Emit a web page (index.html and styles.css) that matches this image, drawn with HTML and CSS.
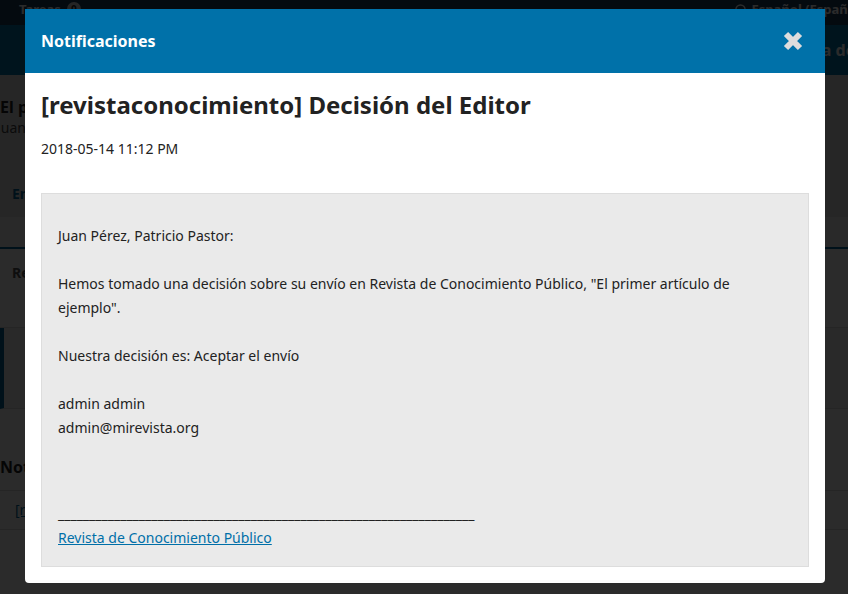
FILE: index.html
```html
<!DOCTYPE html>
<html lang="es">
<head>
<meta charset="utf-8">
<title>Notificaciones</title>
<link rel="stylesheet" href="styles.css">
</head>
<body>
<div class="page">
  <div class="topbar">
    <div class="tasks">Tareas <span class="badge">0</span></div>
    <div class="lang">
      <svg class="globe" width="11" height="11" viewBox="0 0 12 12"><circle cx="6" cy="6" r="5" fill="none" stroke="currentColor" stroke-width="1.6"/></svg>
      Español (España)
    </div>
  </div>
  <div class="header">
    <span class="header-link">Biblioteca de envíos</span>
  </div>
  <div class="subhead">
    <div class="sub-title">El primer artículo de ejemplo</div>
    <div class="sub-authors">Juan Pérez, Patricio Pastor</div>
    <div class="tabs"><span class="tab active">Envío</span></div>
  </div>
  <div class="tabstrip"></div>
  <div class="stage">Revisión</div>
  <div class="notice">
    <div class="notice-title">Envío aceptado</div>
    <div class="notice-text">El envío ha sido aceptado.</div>
  </div>
  <div class="section-title">Notificaciones</div>
  <div class="table-row"><span class="row-link">[revistaconocimiento] Decisión del Editor</span></div>
</div>

<div class="overlay"></div>

<div class="modal">
  <div class="modal-head">
    <span class="modal-title">Notificaciones</span>
    <svg class="close" width="22" height="22" viewBox="0 0 22 22" aria-label="Cerrar">
      <path d="M4 4 L18 18 M18 4 L4 18" stroke="#dddddd" stroke-width="6" stroke-linecap="butt" fill="none"/>
    </svg>
  </div>
  <div class="modal-body">
    <h1 class="subject">[revistaconocimiento] Decisión del Editor</h1>
    <div class="date">2018-05-14 11:12 PM</div>
    <div class="message">
      <div class="msg-text">Juan Pérez, Patricio Pastor:<br><br>Hemos tomado una decisión sobre su envío en Revista de Conocimiento Público, "El primer artículo de ejemplo".<br><br>Nuestra decisión es: Aceptar el envío<br><br>admin admin<br>admin@mirevista.org</div>
      <div class="signature">
        <div class="sig-line">___________________________________________________________________</div>
        <a class="sig-link" href="#">Revista de Conocimiento Público</a>
      </div>
    </div>
  </div>
</div>
</body>
</html>
```
FILE: styles.css
```css
html, body {
  margin: 0;
  padding: 0;
}
body {
  width: 848px;
  height: 594px;
  overflow: hidden;
  font-family: "Noto Sans", "Open Sans", sans-serif;
  color: #222;
  background: #ffffff;
  position: relative;
}

/* background page */
.page {
  width: 848px;
  height: 594px;
  background: #fff;
  overflow: hidden;
}
.topbar {
  height: 25px;
  background: #1a3d5c;
  color: #fff;
  display: flex;
  justify-content: space-between;
  align-items: flex-start;
  padding: 0 0 0 19px;
  font-size: 13px;
  font-weight: 700;
  line-height: 18px;
}
.tasks {
  display: flex;
  align-items: center;
  gap: 6px;
}
.badge {
  display: inline-flex;
  width: 14px;
  height: 14px;
  border-radius: 50%;
  background: #ddd;
  color: #222;
  font-size: 10px;
  align-items: center;
  justify-content: center;
}
.lang {
  display: flex;
  align-items: center;
  gap: 6px;
  white-space: nowrap;
  margin-right: -12px;
}
.header {
  height: 50px;
  background: #0078ae;
  color: #fff;
  font-weight: 700;
  font-size: 16px;
  line-height: 50px;
  white-space: nowrap;
  overflow: hidden;
}
.header-link {
  margin-left: 752px;
}
.subhead {
  height: 142px;
  background: #e2e2e2;
  box-sizing: border-box;
  padding: 21px 0 0 0;
  margin-left: -3px;
}
.sub-title {
  font-size: 16px;
  font-weight: 700;
  line-height: 22px;
  padding-left: 3px;
}
.sub-authors {
  font-size: 14px;
  line-height: 20px;
  color: #444;
}
.tabs {
  margin-top: 44px;
  padding-left: 15px;
}
.tab {
  font-size: 14px;
  font-weight: 700;
  color: #006798;
}
.tabstrip {
  height: 30px;
  background: #f4f4f4;
  border-bottom: 2px solid #006798;
}
.stage {
  height: 78px;
  padding-left: 12px;
  line-height: 48px;
  font-size: 14px;
  font-weight: 700;
  color: #555;
  border-bottom: 1px solid #ddd;
}
.notice {
  height: 81px;
  border-left: 4px solid #006798;
  background: #f0f0f0;
  border-bottom: 1px solid #ddd;
  padding: 15px 0 0 60px;
  box-sizing: border-box;
  font-size: 14px;
  line-height: 24px;
}
.notice-title {
  font-weight: 700;
}
.section-title {
  height: 81px;
  line-height: 116px;
  font-size: 16px;
  font-weight: 700;
  padding-left: 0;
  border-bottom: 1px solid #ddd;
}
.table-row {
  height: 38px;
  line-height: 38px;
  font-size: 14px;
  padding-left: 15px;
  border-bottom: 1px solid #ddd;
}
.row-link {
  color: #006798;
  text-decoration: underline;
}

.overlay {
  position: absolute;
  inset: 0;
  background: rgba(0, 0, 0, 0.83);
}

/* modal */
.modal {
  position: absolute;
  left: 25px;
  top: 9px;
  width: 800px;
  background: #fff;
  border-radius: 0 0 4px 4px;
  overflow: hidden;
}
.modal-head {
  height: 64px;
  background: #0071a9;
  display: flex;
  align-items: center;
  justify-content: space-between;
  padding: 0 21px 0 16px;
}
.modal-title {
  color: #fff;
  font-size: 16px;
  font-weight: 700;
}
.close {
  display: block;
}
.modal-body {
  padding: 16px 16px 16px 16px;
}
.subject {
  margin: 0;
  font-size: 24px;
  font-weight: 700;
  line-height: 32px;
  color: #222;
}
.date {
  margin-top: 18px;
  font-size: 14px;
  line-height: 20px;
}
.message {
  margin-top: 34px;
  background: #eaeaea;
  border: 1px solid #dddddd;
  padding: 30px 16px 16px 16px;
  font-size: 14px;
  line-height: 24px;
}
.signature {
  margin-top: 62px;
}
.sig-line {
  white-space: nowrap;
}
.sig-link {
  color: #006fa8;
  text-decoration: underline;
}
```
